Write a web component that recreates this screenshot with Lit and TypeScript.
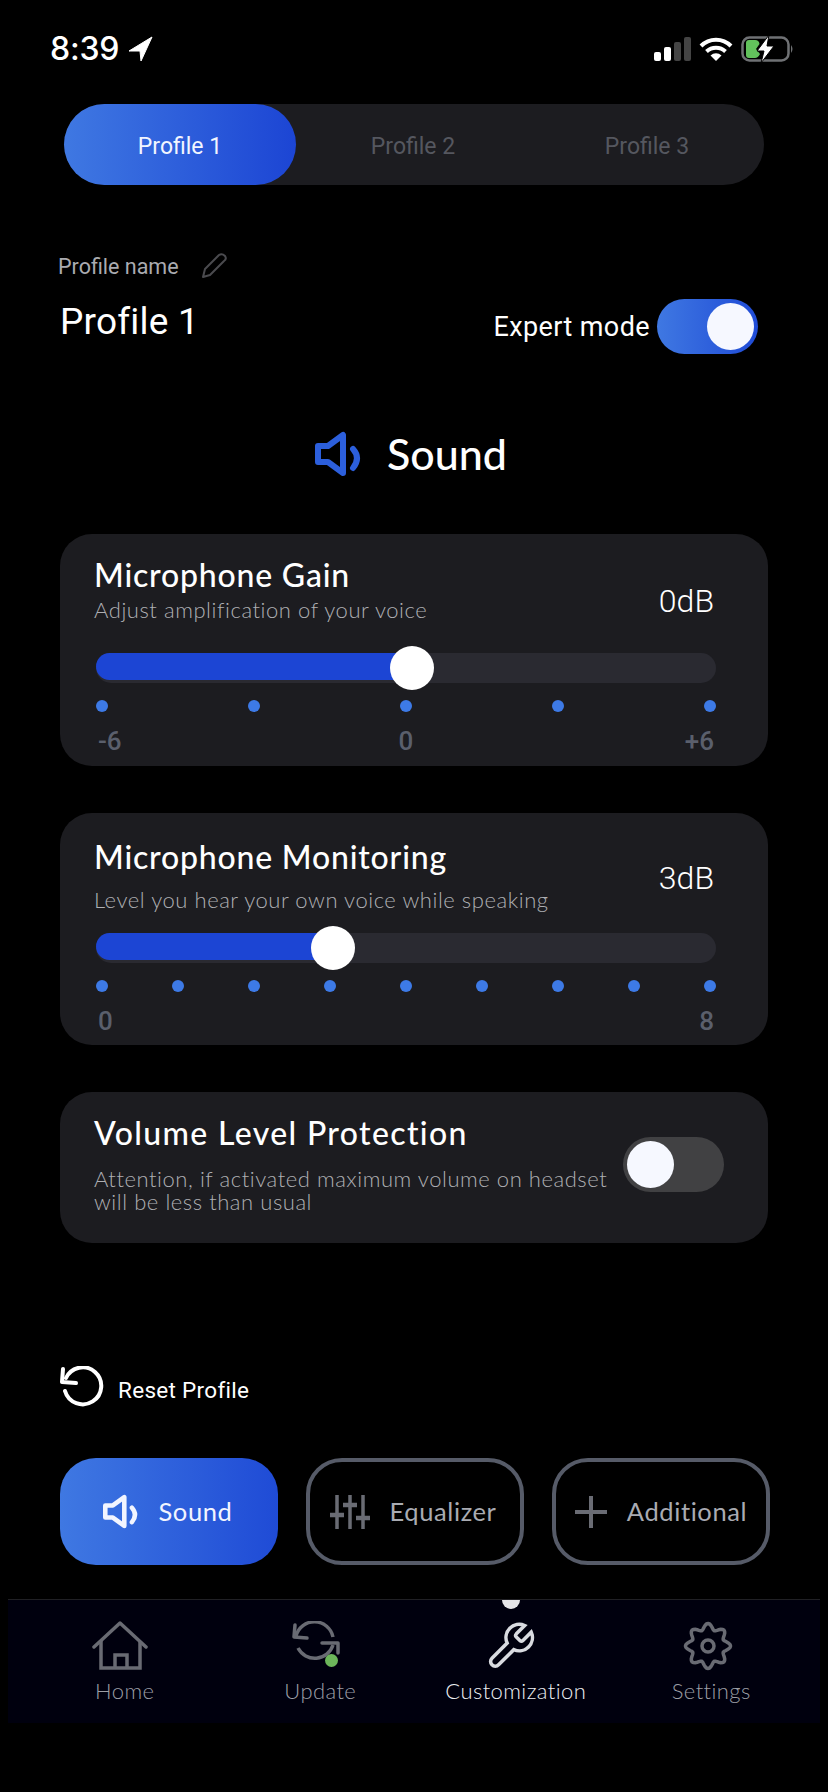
import {LitElement, html, css, svg} from 'lit';
import {customElement} from 'lit/decorators.js';

const speaker = (color: string, w: number, h: number) => html`
  <svg width=${w} height=${h} viewBox="0 0 48 46" fill="none" stroke=${color}>
    <path d="M4 15H14L29 4V42L14 31H4Z" stroke-width="6" stroke-linejoin="round"></path>
    <path d="M39 18Q47 27 39 37" stroke-width="6" stroke-linecap="round"></path>
  </svg>
`;

// eight rounded lobes, sampled around the centre of the icon
const gearPath = () => {
  const points: string[] = [];
  for (let i = 0; i < 96; i++) {
    const angle = (i / 96) * Math.PI * 2;
    const radius = 19.5 + 3 * Math.cos(angle * 8);
    const x = 30 + radius * Math.sin(angle);
    const y = 25 - radius * Math.cos(angle);
    points.push(`${x.toFixed(1)} ${y.toFixed(1)}`);
  }
  return `M${points.join('L')}Z`;
};

const navIcons: Record<string, unknown> = {
  home: svg`
    <path d="M2 26L28 2L54 26" stroke-linecap="round" stroke-linejoin="round"></path>
    <path d="M9 20V47H48V20M23 47V34H35V47"></path>
  `,
  update: svg`
    <path d="M9 15A19 19 0 0 1 46 16M11 27A19 19 0 0 0 46 24"></path>
    <path d="M8 4L7 16L20 17M35 22H51V32" stroke-linecap="round" stroke-linejoin="round"></path>
  `,
  wrench: svg`
    <g transform="translate(1 -1) scale(2.2)">
      <path stroke-width="1.6" d="M14.7 6.3a1 1 0 0 0 0 1.4l1.6 1.6a1 1 0 0 0 1.4 0l3.77-3.77a6 6 0 0 1-7.94 7.94l-6.91 6.91a2.12 2.12 0 0 1-3-3l6.91-6.91a6 6 0 0 1 7.94-7.94l-3.76 3.76z"></path>
    </g>
  `,
  gear: svg`
    <circle cx="30" cy="25" r="6"></circle>
    <path d=${gearPath()}></path>
  `,
};

const navItems = [
  {label: 'Home', icon: 'home'},
  {label: 'Update', icon: 'update', badge: true},
  {label: 'Customization', icon: 'wrench', active: true},
  {label: 'Settings', icon: 'gear'},
];

const sliders = [
  {
    kind: 'gain',
    title: 'Microphone Gain',
    desc: 'Adjust amplification of your voice',
    value: '0dB',
    percent: 51,
    dots: 5,
    labels: ['-6', '0', '+6'],
  },
  {
    kind: 'monitor',
    title: 'Microphone Monitoring',
    desc: 'Level you hear your own voice while speaking',
    value: '3dB',
    percent: 38.2,
    dots: 9,
    labels: ['0', '8'],
  },
];

@customElement('app-root')
export class AppRoot extends LitElement {
  static styles = css`
    :host {
      display: block;
      width: 828px;
      height: 1792px;
      background: #000;
      color: #fff;
      font-family: Roboto, sans-serif;
      overflow: hidden;
    }

    svg {
      display: block;
      flex: none;
    }

    .status {
      display: flex;
      align-items: center;
      height: 98px;
      padding: 0 33px 0 50px;
      box-sizing: border-box;
    }

    .time {
      font: 500 32px/1 Inter, 'Liberation Sans', sans-serif;
      letter-spacing: -0.2px;
      margin-right: 8px;
    }

    .status-right {
      display: flex;
      align-items: center;
      gap: 8px;
      margin-left: auto;
    }

    .tabs {
      display: grid;
      grid-template-columns: 232px 234px 234px;
      height: 81px;
      margin: 6px 64px 0;
      border-radius: 41px;
      background: #1c1c20;
    }

    .tab {
      display: flex;
      align-items: center;
      justify-content: center;
      padding-top: 3px;
      font-size: 23px;
      color: #55575f;
    }

    .tab.active {
      color: #f2f5ff;
      border-radius: 41px;
      background: linear-gradient(90deg, #3f78e2, #1c45d4);
    }

    .profile {
      display: grid;
      grid-template-columns: 1fr auto;
      padding: 66px 70px 0 58px;
    }

    .name-label {
      display: flex;
      align-items: center;
      gap: 22px;
      height: 30px;
      font-size: 21.5px;
      color: #aaabb0;
      grid-column: 1 / 3;
    }

    .name {
      font-size: 37px;
      line-height: 44px;
      margin: 19px 0 0 2px;
      letter-spacing: 0.2px;
    }

    .expert {
      display: flex;
      align-items: center;
      gap: 7px;
      font-size: 27px;
      letter-spacing: 0.4px;
      margin-top: 18px;
    }

    .switch {
      display: flex;
      align-items: center;
      width: 101px;
      height: 55px;
      padding: 4px;
      box-sizing: border-box;
      border-radius: 28px;
    }

    .switch.on {
      justify-content: flex-end;
      background: linear-gradient(90deg, #3f78e2, #1f4bd6);
    }

    .switch.off {
      background: #414143;
    }

    .knob {
      width: 47px;
      height: 47px;
      border-radius: 50%;
      background: #f6f8ff;
    }

    .heading {
      display: flex;
      align-items: center;
      justify-content: center;
      gap: 25px;
      margin: 77px 0 0 -7px;
      height: 46px;
      font: 500 43px/46px Lato, sans-serif;
    }

    .cards {
      display: flex;
      flex-direction: column;
      gap: 47px;
      margin: 57px 60px 0;
    }

    .card {
      border-radius: 32px;
      background: #1c1c20;
      padding: 22px 0 10px 34px;
    }

    .card.monitor {
      padding-top: 25px;
      padding-bottom: 9px;
    }

    .head {
      display: grid;
      grid-template-columns: 1fr auto;
      padding-right: 54px;
    }

    .title {
      font: 500 32px/38px Lato, sans-serif;
      letter-spacing: 0.8px;
    }

    .desc {
      font: 300 22px/26px Lato, sans-serif;
      letter-spacing: 0.55px;
      color: #aeafb3;
      margin-top: 3px;
    }

    .monitor .desc {
      margin-top: 11px;
    }

    .value {
      font: 300 32px/38px Roboto, sans-serif;
      margin-top: 26px;
    }

    .monitor .value {
      margin-top: 21px;
    }

    .slider {
      margin: 30px 52px 0 2px;
    }

    .monitor .slider {
      margin-top: 20px;
    }

    .track {
      position: relative;
      height: 30px;
      border-radius: 15px;
      background: #2a2a31;
    }

    .fill {
      height: 27px;
      border-radius: 14px 0 0 14px;
      background: #1c45d4;
    }

    .thumb {
      position: absolute;
      top: -7px;
      width: 44px;
      height: 44px;
      margin-left: -22px;
      border-radius: 50%;
      background: #fff;
    }

    .dots {
      display: flex;
      justify-content: space-between;
      margin-top: 17px;
    }

    .dot {
      width: 12px;
      height: 12px;
      border-radius: 50%;
      background: #3d7ae6;
    }

    .scale {
      display: flex;
      padding: 0 2px;
      margin-top: 14px;
      font: 500 26px/30px Roboto, sans-serif;
      color: #5a5f6c;
    }

    .scale span {
      flex: 1;
    }

    .scale span:nth-child(2):not(:last-child) {
      text-align: center;
    }

    .scale span:last-child {
      text-align: right;
    }

    .card.protect {
      display: grid;
      grid-template-columns: 1fr auto;
      height: 151px;
      box-sizing: border-box;
      padding: 22px 44px 0 34px;
    }

    .protect .title {
      letter-spacing: 1.35px;
    }

    .protect .desc {
      line-height: 23px;
      margin-top: 15px;
    }

    .protect .switch {
      margin-top: 23px;
    }

    .reset {
      display: flex;
      align-items: flex-start;
      gap: 14px;
      height: 42px;
      margin: 123px 0 0 60px;
      font-size: 22.5px;
      line-height: 48px;
      letter-spacing: 0.3px;
    }

    .sections {
      display: grid;
      grid-template-columns: repeat(3, 218px);
      justify-content: space-between;
      margin: 50px 58px 0 60px;
    }

    .section {
      display: flex;
      align-items: center;
      justify-content: center;
      gap: 20px;
      height: 107px;
      box-sizing: border-box;
      border-radius: 36px;
      border: 4px solid #565b68;
      font: 400 25.5px/1 Lato, sans-serif;
      letter-spacing: 0.6px;
      color: #a9abb2;
    }

    .section:not(:last-child) {
      padding-right: 4px;
    }

    .section.active {
      border: none;
      color: #f2f5ff;
      background: linear-gradient(90deg, #3f78e2, #1f4bd6);
    }

    .nav {
      position: relative;
      display: grid;
      grid-template-columns: repeat(4, 195.5px);
      height: 124px;
      margin: 34px 8px 0;
      padding-left: 19px;
      box-sizing: border-box;
      background: #00000e;
      border-top: 1px solid #202024;
    }

    .nav-item {
      display: flex;
      flex-direction: column;
      align-items: center;
      font: 300 22px/28px Lato, sans-serif;
      letter-spacing: 0.4px;
      color: #9c9ea5;
    }

    .nav-item.active {
      color: #eceef2;
    }

    .nav-icon {
      position: relative;
      width: 56px;
      height: 50px;
      margin: 21px 10px 6px 0;
      fill: none;
      stroke: #696b73;
      stroke-width: 3.5;
    }

    .nav-item.active .nav-icon {
      stroke: #d9dbe0;
    }

    .badge {
      position: absolute;
      right: 5px;
      bottom: 4px;
      width: 13px;
      height: 13px;
      border-radius: 50%;
      background: #6cb65a;
    }

    .marker {
      position: absolute;
      left: 494px;
      top: 0;
      width: 18px;
      height: 9px;
      border-radius: 0 0 9px 9px;
      background: #e6e6e8;
    }
  `;

  renderStatus() {
    return html`
      <div class="status">
        <span class="time">8:39</span>
        <svg width="26" height="26" viewBox="0 0 26 26" fill="#fff">
          <path d="M25 1L2 15L13 15L14 25Z" stroke="#fff" stroke-linejoin="round"></path>
        </svg>
        <div class="status-right">
          <svg width="37" height="24" viewBox="0 0 37 24">
            <rect x="0" y="15" width="7" height="9" rx="2" fill="#fff"></rect>
            <rect x="10" y="10" width="7" height="14" rx="2" fill="#fff"></rect>
            <rect x="20" y="5" width="7" height="19" rx="2" fill="#444"></rect>
            <rect x="30" y="0" width="7" height="24" rx="2" fill="#444"></rect>
          </svg>
          <svg width="34" height="24" viewBox="0 0 34 24" fill="none" stroke="#fff" stroke-width="4">
            <path d="M2 9A21 21 0 0 1 32 9M7.500 14.500A14 14 0 0 1 26.500 14.500"></path>
            <path d="M17 24L11.500 18.500A8 8 0 0 1 22.500 18.500Z" fill="#fff" stroke="none"></path>
          </svg>
          <svg width="54" height="28" viewBox="0 0 54 28" fill="none">
            <rect x="1.500" y="2.500" width="46" height="23" rx="7" stroke="#6f7174" stroke-width="2.500"></rect>
            <path d="M50 10Q53 14 50 18Z" fill="#6f7174"></path>
            <path d="M5 8Q5 5 8 5H14Q18 5 18.500 9L15 14L19 19Q17 23 14 23H8Q5 23 5 20Z" fill="#62c25c"></path>
            <path d="M28 0L16 16H23L20 28L33 11H26Z" fill="#fff" stroke="#000" stroke-width="1"></path>
          </svg>
        </div>
      </div>
    `;
  }

  renderSlider(item: (typeof sliders)[number]) {
    return html`
      <section class="card ${item.kind}">
        <div class="head">
          <div>
            <div class="title">${item.title}</div>
            <div class="desc">${item.desc}</div>
          </div>
          <div class="value">${item.value}</div>
        </div>
        <div class="slider">
          <div class="track">
            <div class="fill" style="width: ${item.percent}%"></div>
            <div class="thumb" style="left: ${item.percent}%"></div>
          </div>
          <div class="dots">
            ${Array.from({length: item.dots}, () => html`<span class="dot"></span>`)}
          </div>
          <div class="scale">
            ${item.labels.map((label) => html`<span>${label}</span>`)}
          </div>
        </div>
      </section>
    `;
  }

  render() {
    return html`
      ${this.renderStatus()}

      <div class="tabs">
        <div class="tab active">Profile 1</div>
        <div class="tab">Profile 2</div>
        <div class="tab">Profile 3</div>
      </div>

      <div class="profile">
        <div class="name-label">
          Profile name
          <svg width="26" height="26" viewBox="0 0 26 26" fill="none" stroke="#4a4a4e" stroke-width="2">
            <path d="M2 24L4 16L18 2Q21 0 24 3Q26 6 23 8L9 22Z" stroke-linejoin="round"></path>
          </svg>
        </div>
        <div class="name">Profile 1</div>
        <div class="expert">
          Expert mode
          <div class="switch on"><span class="knob"></span></div>
        </div>
      </div>

      <div class="heading">${speaker('#2c5fdc', 48, 46)} Sound</div>

      <div class="cards">
        ${sliders.map((item) => this.renderSlider(item))}
        <section class="card protect">
          <div>
            <div class="title">Volume Level Protection</div>
            <div class="desc">Attention, if activated maximum volume on headset<br />will be less than usual</div>
          </div>
          <div class="switch off"><span class="knob"></span></div>
        </section>
      </div>

      <div class="reset">
        <svg width="44" height="42" viewBox="0 0 44 42" fill="none" stroke="#fff" stroke-width="4">
          <path d="M6 12A18.500 18.500 0 1 1 5 25" stroke-linecap="round"></path>
          <path d="M3 3L2 16L16 17" stroke-linecap="round" stroke-linejoin="round"></path>
        </svg>
        Reset Profile
      </div>

      <div class="sections">
        <div class="section active">${speaker('#f2f5ff', 37, 35)} Sound</div>
        <div class="section">
          <svg width="40" height="34" viewBox="0 0 40 34" fill="none" stroke="#6a6c74">
            <path d="M7 0V34M20 0V34M33 0V34" stroke-width="3.500"></path>
            <path d="M0 20H14M13 10H27M26 23H40" stroke-width="4.500"></path>
          </svg>
          Equalizer
        </div>
        <div class="section">
          <svg width="32" height="32" viewBox="0 0 32 32" fill="none" stroke="#6a6c74" stroke-width="4">
            <path d="M16 0V32M0 16H32"></path>
          </svg>
          Additional
        </div>
      </div>

      <nav class="nav">
        ${navItems.map(
          (item) => html`
            <div class="nav-item ${item.active ? 'active' : ''}">
              <div class="nav-icon">
                <svg width="56" height="50" viewBox="0 0 56 50">${navIcons[item.icon]}</svg>
                ${item.badge ? html`<span class="badge"></span>` : ''}
              </div>
              ${item.label}
            </div>
          `
        )}
        <span class="marker"></span>
      </nav>
    `;
  }
}
